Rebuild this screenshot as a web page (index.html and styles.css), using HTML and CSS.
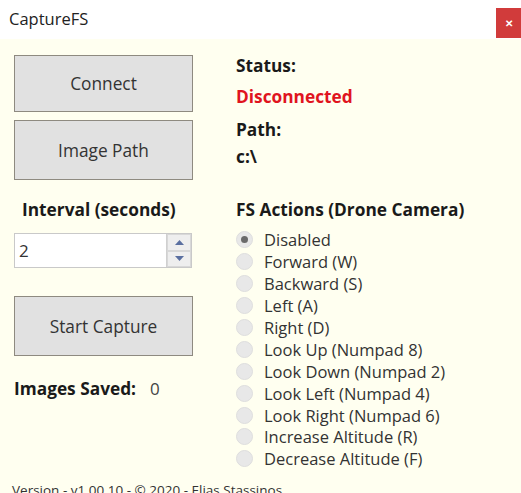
FILE: index.html
```html
<!DOCTYPE html>
<html>
<head>
<meta charset="utf-8">
<link rel="stylesheet" href="styles.css">
</head>
<body>
<div class="window">
  <div class="titlebar">
    <span class="title">CaptureFS</span>
    <span class="close">&#x2715;</span>
  </div>
  <div class="content">
    <div class="main">
      <div class="left">
        <button class="btn btn-connect">Connect</button>
        <button class="btn btn-path">Image Path</button>
        <div class="interval-label">Interval (seconds)</div>
        <div class="spin">
          <span class="spin-value">2</span>
          <span class="spin-btns">
            <span class="spin-btn"><svg width="9" height="5" viewBox="0 0 9 5"><path d="M0 5 L4.5 0 L9 5 Z" fill="#5a6fa0"/></svg></span>
            <span class="spin-btn"><svg width="9" height="5" viewBox="0 0 9 5"><path d="M0 0 L4.5 5 L9 0 Z" fill="#5a6fa0"/></svg></span>
          </span>
        </div>
        <button class="btn btn-start">Start Capture</button>
        <div class="saved"><span class="saved-label">Images Saved:</span><span class="saved-value">0</span></div>
      </div>
      <div class="right">
        <div class="lbl">Status:</div>
        <div class="status">Disconnected</div>
        <div class="lbl lbl-path">Path:</div>
        <div class="pathval">c:\</div>
        <div class="actions-title">FS Actions (Drone Camera)</div>
        <ul class="radios">
          <li class="checked"><span class="radio"></span>Disabled</li>
          <li><span class="radio"></span>Forward (W)</li>
          <li><span class="radio"></span>Backward (S)</li>
          <li><span class="radio"></span>Left (A)</li>
          <li><span class="radio"></span>Right (D)</li>
          <li><span class="radio"></span>Look Up (Numpad 8)</li>
          <li><span class="radio"></span>Look Down (Numpad 2)</li>
          <li><span class="radio"></span>Look Left (Numpad 4)</li>
          <li><span class="radio"></span>Look Right (Numpad 6)</li>
          <li><span class="radio"></span>Increase Altitude (R)</li>
          <li><span class="radio"></span>Decrease Altitude (F)</li>
        </ul>
      </div>
    </div>
    <div class="version">Version - v1.00.10 - © 2020 - Elias Stassinos</div>
  </div>
</div>
</body>
</html>
```
FILE: styles.css
```css
* { box-sizing: border-box; }
html, body { margin: 0; padding: 0; }
body {
  width: 521px;
  height: 493px;
  overflow: hidden;
  font-family: "Open Sans", "Noto Sans", sans-serif;
  color: #1e1e1e;
  background: #fffff0;
}
.window { display: flex; flex-direction: column; height: 493px; }
.titlebar {
  height: 39px;
  background: #ffffff;
  display: flex;
  align-items: flex-start;
  justify-content: space-between;
  flex-shrink: 0;
}
.title {
  font-size: 16.5px;
  line-height: 22px;
  color: #222;
  margin: 8px 0 0 9px;
}
.close {
  margin-top: 8px;
  width: 25px;
  height: 30px;
  background: #d13b3b;
  color: #fff;
  font-size: 10px;
  font-weight: bold;
  display: flex;
  align-items: center;
  justify-content: center;
}
.content {
  flex: 1;
  background: #fffff0;
  display: flex;
  flex-direction: column;
}
.main { display: flex; padding-left: 14px; }
.left { width: 179px; display: flex; flex-direction: column; }
.btn {
  font-family: inherit;
  font-size: 17.3px;
  color: #333;
  background: #e1e1e1;
  border: 1px solid #8e8a80;
  width: 179px;
  padding: 0;
}
.btn-connect { margin-top: 16px; height: 57px; }
.btn-path { margin-top: 8px; height: 60px; }
.interval-label {
  margin-top: 19px;
  margin-left: 8px;
  font-weight: bold;
  font-size: 17.3px;
  line-height: 22px;
  color: #1a1a1a;
}
.spin {
  margin-top: 12px;
  height: 35px;
  width: 178px;
  background: #fff;
  border: 1px solid #c9c9c9;
  display: flex;
  align-items: center;
  justify-content: space-between;
}
.spin-value { font-size: 17px; margin-left: 4px; color: #333; }
.spin-btns {
  width: 25px;
  height: 100%;
  display: flex;
  flex-direction: column;
  border-left: 1px solid #d0d0d0;
}
.spin-btn {
  flex: 1;
  background: #eeeeee;
  display: flex;
  align-items: center;
  justify-content: center;
  border: 1px solid #d8d8d8;
}
.btn-start { margin-top: 28px; height: 60px; }
.saved {
  margin-top: 22px;
  display: flex;
  align-items: baseline;
  line-height: 22px;
}
.saved-label { font-weight: bold; font-size: 17.3px; color: #1a1a1a; }
.saved-value { margin-left: 14px; font-size: 17px; color: #444; }
.right { margin-left: 43px; display: flex; flex-direction: column; }
.lbl { font-weight: bold; font-size: 17.3px; line-height: 22px; margin-top: 16px; color: #1a1a1a; }
.status { font-weight: bold; font-size: 17.3px; line-height: 22px; color: #e0141e; margin-top: 9px; }
.lbl.lbl-path { margin-top: 11px; }
.pathval { font-weight: bold; font-size: 17.3px; line-height: 22px; margin-top: 5px; color: #1a1a1a; }
.actions-title { font-weight: bold; font-size: 17.3px; line-height: 22px; margin-top: 31px; color: #1a1a1a; }
.radios { list-style: none; margin: 8px 0 0 0; padding: 0; }
.radios li {
  height: 21.9px;
  display: flex;
  align-items: center;
  font-size: 16.5px;
  color: #333;
}
.radio {
  width: 17px;
  height: 17px;
  border-radius: 50%;
  background: #e8e8e8;
  border: 1px solid #dedede;
  margin-right: 11px;
  display: flex;
  align-items: center;
  justify-content: center;
}
.checked .radio::after {
  content: "";
  width: 7px;
  height: 7px;
  border-radius: 50%;
  background: #6a6a6a;
}
.version {
  margin-top: 11px;
  margin-left: 12px;
  font-size: 13.5px;
  color: #333;
}
```
